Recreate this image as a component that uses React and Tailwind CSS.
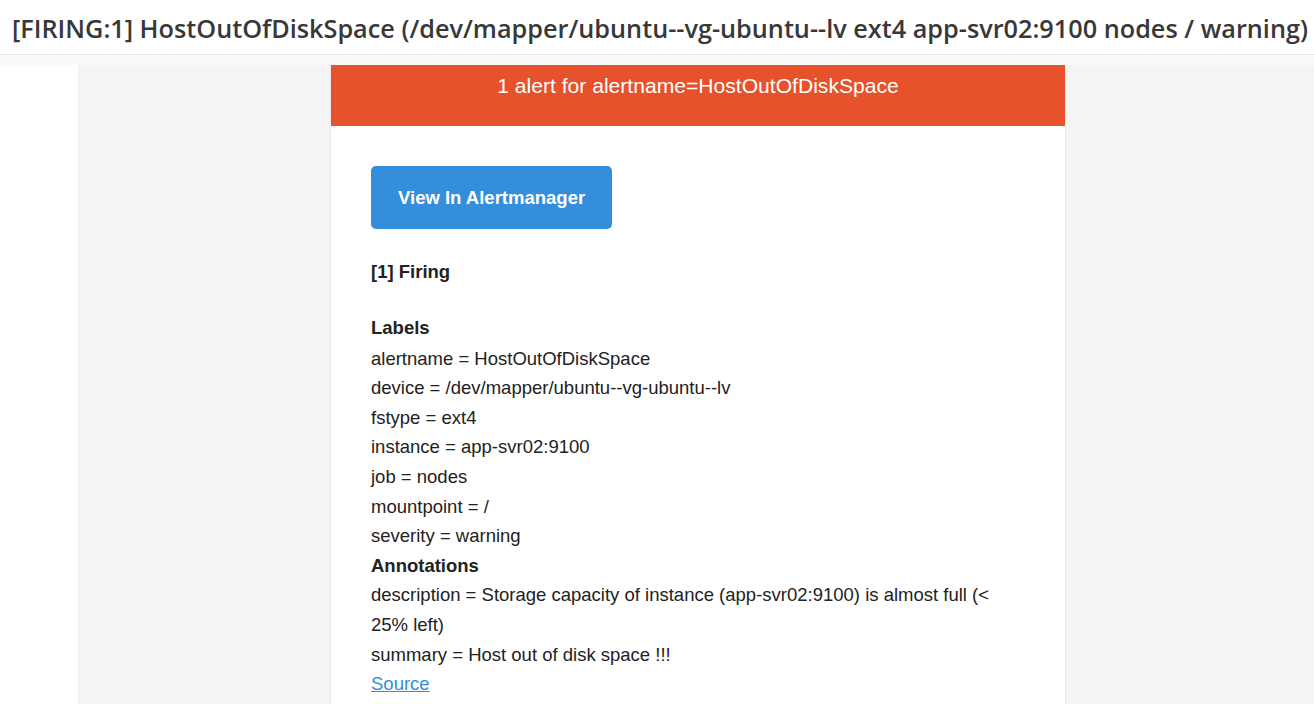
import React from 'react';

const labels = [
  ["alertname", "HostOutOfDiskSpace"],
  ["device", "/dev/mapper/ubuntu--vg-ubuntu--lv"],
  ["fstype", "ext4"],
  ["instance", "app-svr02:9100"],
  ["job", "nodes"],
  ["mountpoint", "/"],
  ["severity", "warning"],
];

export default function App() {
  return (
    <div className="h-[704px] overflow-hidden bg-white">
      <header className="h-[55px] border-b border-[#e6e6e6] px-3 pt-[4px] flex items-center">
        <h1 className="text-[25.25px] font-semibold text-[#383838] whitespace-nowrap" style={{ fontFamily: '"Open Sans", sans-serif' }}>
          [FIRING:1] HostOutOfDiskSpace (/dev/mapper/ubuntu--vg-ubuntu--lv ext4 app-svr02:9100 nodes / warning)
        </h1>
      </header>
      <div className="h-[10px] bg-[#f9f9f9]" />
      <div className="flex">
        <div className="w-[78px] shrink-0" />
        <div className="flex-1 bg-[#f4f4f4] h-[640px]">
          <div className="ml-[252px] w-[736px] bg-white border-x border-[#e9e9e9] h-full text-[18.5px] text-[#222] leading-[29.6px]" style={{ fontFamily: '"Liberation Sans", Arial, sans-serif' }}>
            <div className="bg-[#e6522c] text-white text-[21.1px] leading-[30px] text-center pt-[6px] pb-[25px]">
              1 alert for alertname=HostOutOfDiskSpace
            </div>
            <div className="px-[40px] pt-[40px]">
              <a className="inline-flex items-center h-[63px] px-[27px] rounded-[5px] bg-[#348eda] text-white font-bold text-[18.5px]">
                View In Alertmanager
              </a>
              <div className="mt-[28px] font-bold">[1] Firing</div>
              <div className="h-[26px]" />
              <div className="font-bold">Labels</div>
              <div className="pt-[1.5px]">
                {labels.map(([k, v]) => (
                  <div key={k}>{k} = {v}</div>
                ))}
                <div className="font-bold">Annotations</div>
                <div>description = Storage capacity of instance (app-svr02:9100) is almost full (&lt; 25% left)</div>
                <div>summary = Host out of disk space !!!</div>
                <a className="text-[#348eda] underline">Source</a>
              </div>
            </div>
          </div>
        </div>
      </div>
    </div>
  );
}
